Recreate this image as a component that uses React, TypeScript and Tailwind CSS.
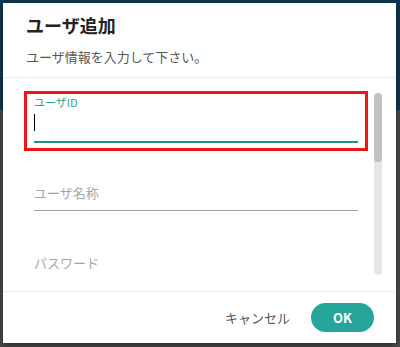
import React from "react";

const font = { fontFamily: '"Noto Sans CJK JP", "Noto Sans", sans-serif' };

function PlainField({ label }: { label: string }) {
  return (
    <div className="px-[10px]">
      <div className="border-b border-[#9e9e9e] pb-[7px] text-[13px] leading-[20px] text-[#a6a6a6]">{label}</div>
    </div>
  );
}

export default function App() {
  return (
    <div
      className="h-[347px] w-[400px] bg-[linear-gradient(to_bottom,#0c3a4e_0px,#0c3a4e_110px,#4b4b4b_110px,#4b4b4b_100%)] p-[3px]"
      style={font}
    >
      <div className="flex h-[340px] w-[393px] flex-col bg-white shadow-[0_2px_8px_rgba(0,0,0,0.45)]">
        <div className="border-b border-[#ececec] px-[23px] pb-[10px] pt-[9px]">
          <h1 className="text-[18px] font-bold leading-[26px] text-[#222]">ユーザ追加</h1>
          <p className="mt-[9px] text-[13px] leading-[20px] text-[#555]">ユーザ情報を入力して下さい。</p>
        </div>

        <div className="pb-[15px] pl-[21px] pr-[14px] pt-[13px]">
          <div className="flex h-[185px] gap-[6px] overflow-hidden">
            <div className="flex-1">
              <div className="border-[3px] border-[#f01414] px-[7px] pb-[5px] pt-px">
                <div className="text-[11px] leading-[14px] text-[#26a69a]">ユーザID</div>
                <div className="border-b-2 border-[#1f9488] pb-[10px] pt-[5px]">
                  <div className="h-[17px] w-px bg-black" />
                </div>
              </div>
              <div className="mt-[32px]">
                <PlainField label="ユーザ名称" />
              </div>
              <div className="mt-[42px]">
                <PlainField label="パスワード" />
              </div>
            </div>
            <div className="mt-[2px] flex h-[182px] w-[8px] flex-col rounded-full bg-[#e6e6e6]">
              <div className="h-[69px] rounded-full bg-[#c1c1c1]" />
            </div>
          </div>
        </div>

        <div className="flex flex-1 items-center justify-end gap-[21px] border-t border-[#ececec] pr-[22px]">
          <button className="text-[13px] text-[#555]">キャンセル</button>
          <button className="h-[29px] w-[63px] rounded-full bg-[#26a69a] text-[13px] font-bold text-white">OK</button>
        </div>
      </div>
    </div>
  );
}
